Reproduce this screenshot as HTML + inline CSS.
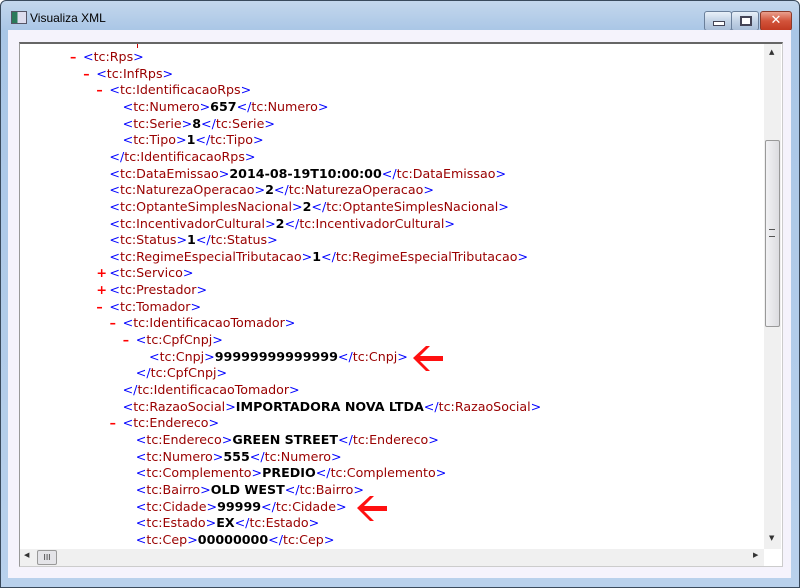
<!DOCTYPE html>
<html><head><meta charset="utf-8"><style>
body{margin:0;width:800px;height:588px;overflow:hidden;background:#fff;font-family:"DejaVu Sans","Liberation Sans",sans-serif}
#win{position:absolute;left:0;top:0;width:798px;height:586px;border:1px solid #3a4a5c;border-radius:6px 6px 0 0;background:linear-gradient(#c4d7ec,#a9c6e6 30px,#b9d1ec);}
#title{position:absolute;left:29px;top:10px;font-family:"Liberation Sans",sans-serif;font-size:12px;color:#000}
#ico{position:absolute;left:10px;top:10px;width:14px;height:11px;border:1px solid #556;background:linear-gradient(90deg,#2a7a5a 40%,#dde 40%)}
.btn{position:absolute;top:10px;height:18px;border:1px solid #6a7f9a;border-radius:3px;background:linear-gradient(#e8f0f8,#c3d3e6 50%,#a9bed8)}
#client{position:absolute;left:8px;top:30px;width:783px;height:548px;background:#f5f3fc}
#box{position:absolute;left:19px;top:42px;width:762px;height:522px;background:#fff;border-top:2px solid #666;border-left:1px solid #999;border-right:1px solid #ccc;border-bottom:1px solid #ccc;overflow:hidden}
.l{position:absolute;font-size:12.65px;line-height:16px;white-space:nowrap;color:#990000}
.b{color:#0000ff}.v{color:#000;font-weight:bold}.m{color:#ff0000;position:absolute;font-weight:bold}
</style></head><body>
<div id="win">
<div id="ico"></div><div id="title">Visualiza XML</div>
<div class="btn" style="left:703px;width:26px"><div style="position:absolute;left:8px;top:9px;width:10px;height:3px;background:#fff;border:1px solid #445"></div></div>
<div class="btn" style="left:730px;width:26px"><div style="position:absolute;left:8px;top:4px;width:8px;height:6px;border:2px solid #445;background:#fff"></div></div>
<div class="btn" style="left:759px;width:30px;border-color:#8a3a2a;background:linear-gradient(#e9a08e,#d2533a 50%,#c23a22)"><div style="position:absolute;left:0;right:0;top:0;text-align:center;color:#fff;font-weight:bold;font-size:13px;line-height:18px">✕</div></div>
</div>
<div id="client"></div>
<div id="box">
<div style="position:absolute;left:744px;top:0;width:17px;height:505px;background:#f0f0f0"></div>
<div style="position:absolute;left:749px;top:4px;font-size:7px;color:#333">▲</div>
<div style="position:absolute;left:749px;top:490px;font-size:7px;color:#333">▼</div>
<div style="position:absolute;left:745px;top:96px;width:13px;height:185px;border:1px solid #999;border-radius:2px;background:linear-gradient(90deg,#f2f2f4,#dcdce0)"><div style="position:absolute;left:3px;top:88px;width:6px;height:6px;border-top:1px solid #555;border-bottom:1px solid #555"></div></div>
<div style="position:absolute;left:0;top:505px;width:744px;height:17px;background:#f0f0f0"></div>
<div style="position:absolute;left:4px;top:507px;font-size:7px;color:#333">◀</div>
<div style="position:absolute;left:733px;top:507px;font-size:7px;color:#333">▶</div>
<div style="position:absolute;left:17px;top:506px;width:18px;height:13px;border:1px solid #999;border-radius:2px;background:#e4e4e8;font-size:8px;text-align:center;line-height:13px;color:#333">III</div>
<div style="position:absolute;left:117px;top:0;width:1px;height:4px;background:#c00"></div>
</div>
<div id="lines"></div>
<svg style="position:absolute;left:0;top:0" width="800" height="588">
<g fill="#ff1010"><polygon points="413,358 426,346 430,346 420,356 443,356 443,361 420,361 430,371 426,371"/>
<polygon points="357,508 370,496 374,496 364,506 387,506 387,511 364,511 374,521 370,521"/></g>
</svg>
<script>
const L=[[0,'-','tc:Rps'],[1,'-','tc:InfRps'],[2,'-','tc:IdentificacaoRps'],[3,'','tc:Numero','657'],[3,'','tc:Serie','8'],[3,'','tc:Tipo','1'],[2,'','/tc:IdentificacaoRps'],
[2,'','tc:DataEmissao','2014-08-19T10:00:00'],[2,'','tc:NaturezaOperacao','2'],[2,'','tc:OptanteSimplesNacional','2'],[2,'','tc:IncentivadorCultural','2'],[2,'','tc:Status','1'],[2,'','tc:RegimeEspecialTributacao','1'],
[2,'+','tc:Servico'],[2,'+','tc:Prestador'],[2,'-','tc:Tomador'],[3,'-','tc:IdentificacaoTomador'],[4,'-','tc:CpfCnpj'],[5,'','tc:Cnpj','99999999999999'],[4,'','/tc:CpfCnpj'],[3,'','/tc:IdentificacaoTomador'],
[3,'','tc:RazaoSocial','IMPORTADORA NOVA LTDA'],[3,'-','tc:Endereco'],[4,'','tc:Endereco','GREEN STREET'],[4,'','tc:Numero','555'],[4,'','tc:Complemento','PREDIO'],[4,'','tc:Bairro','OLD WEST'],[4,'','tc:Cidade','99999'],[4,'','tc:Estado','EX'],[4,'','tc:Cep','00000000']];
let h='';L.forEach((r,i)=>{const x=83+r[0]*13.2,y=49+i*16.65;const n=r[2].replace('/','');
let s=r[2][0]=='/'?'<span class=b>&lt;/</span>'+n+'<span class=b>&gt;</span>':'<span class=b>&lt;</span>'+r[2]+'<span class=b>&gt;</span>';
if(r[3])s+='<span class=v>'+r[3]+'</span><span class=b>&lt;/</span>'+r[2]+'<span class=b>&gt;</span>';
if(r[1])h+='<div class="l m" style="left:'+(x-13)+'px;top:'+y+'px">'+(r[1]=='-'?'–':'+')+'</div>';
h+='<div class=l style="left:'+x+'px;top:'+y+'px">'+s+'</div>';});
document.getElementById('lines').innerHTML=h;
</script>
</body></html>
